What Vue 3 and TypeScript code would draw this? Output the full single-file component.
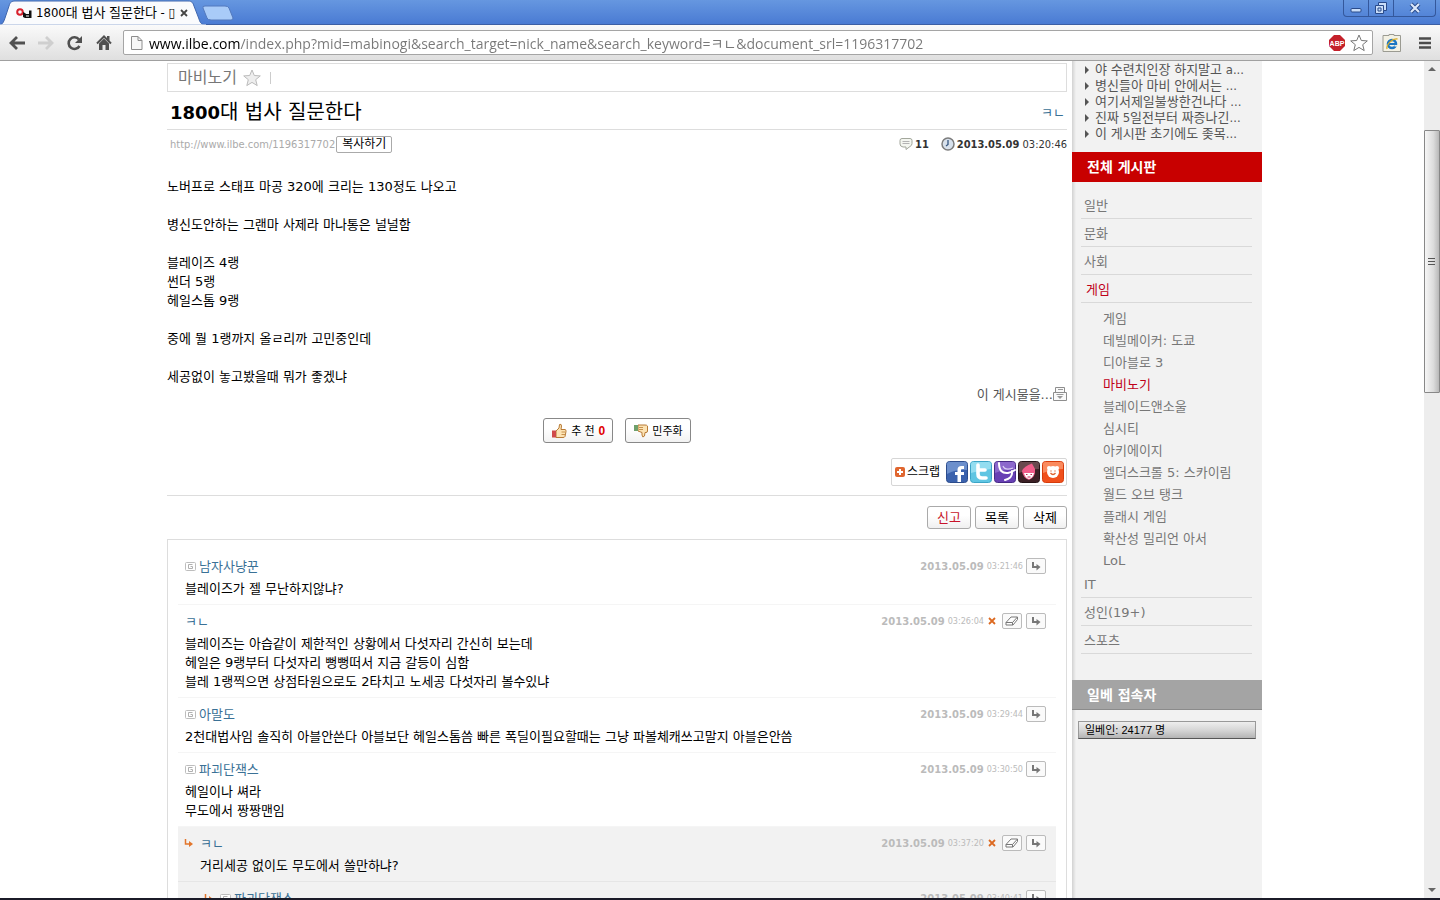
<script setup lang="ts">
import { ref } from 'vue'

interface Comment {
  author: string
  badge: boolean
  time: string
  lines: string[]
  own: boolean
  depth: number
}

const address = ref('www.ilbe.com/index.php?mid=mabinogi&search_target=nick_name&search_keyword=ㅋㄴ&document_srl=1196317702')

const paragraphs: string[][] = [
  ['노버프로 스태프 마공 320에 크리는 130정도 나오고'],
  ['병신도안하는 그랜마 사제라 마나통은 널널함'],
  ['블레이즈 4랭', '썬더 5랭', '헤일스톰 9랭'],
  ['중에 뭘 1랭까지 올ㄹ리까 고민중인데'],
  ['세공없이 놓고봤을때 뭐가 좋겠냐'],
]

const comments: Comment[] = [
  { author: '남자사냥꾼', badge: true, time: '03:21:46', lines: ['블레이즈가 젤 무난하지않냐?'], own: false, depth: 0 },
  {
    author: 'ㅋㄴ', badge: false, time: '03:26:04', own: true, depth: 0,
    lines: [
      '블레이즈는 아습같이 제한적인 상황에서 다섯자리 간신히 보는데',
      '헤일은 9랭부터 다섯자리 뻥뻥떠서 지금 갈등이 심함',
      '블레 1랭찍으면 상점타원으로도 2타치고 노세공 다섯자리 볼수있냐',
    ],
  },
  {
    author: '아말도', badge: true, time: '03:29:44', own: false, depth: 0,
    lines: ['2천대법사임 솔직히 아블안쓴다 아블보단 헤일스톰씀 빠른 폭딜이필요할때는 그냥 파볼체캐쓰고말지 아블은안씀'],
  },
  { author: '파괴단잭스', badge: true, time: '03:30:50', lines: ['헤일이나 쎠라', '무도에서 짱짱맨임'], own: false, depth: 0 },
  { author: 'ㅋㄴ', badge: false, time: '03:37:20', lines: ['거리세공 없이도 무도에서 쓸만하냐?'], own: true, depth: 1 },
  { author: '파괴단잭스', badge: true, time: '03:40:41', lines: [], own: false, depth: 2 },
]

const recent: string[] = [
  '야 수련치인장 하지말고 a...',
  '병신들아 마비 안에서는 ...',
  '여기서제일불쌍한건나다 ...',
  '진짜 5일전부터 짜증나긴...',
  '이 게시판 초기에도 좆목...',
]

const boards: { name: string; children?: string[] }[] = [
  { name: '일반' },
  { name: '문화' },
  { name: '사회' },
  {
    name: '게임',
    children: ['게임', '데빌메이커: 도쿄', '디아블로 3', '마비노기', '블레이드앤소울', '심시티', '아키에이지', '엘더스크롤 5: 스카이림', '월드 오브 탱크', '플래시 게임', '확산성 밀리언 아서', 'LoL'],
  },
  { name: 'IT' },
  { name: '성인(19+)' },
  { name: '스포츠' },
]
</script>

<template>
  <div class="window">
    <header class="titlebar">
      <div class="tab">
        <svg class="tab-shape" width="208" height="25" viewBox="0 0 208 25" aria-hidden="true">
          <path d="M0 25C3 24 4 21 5 18L9 6C10 2 12 1 15 1H188C192 1 193 3 194 6L199 19C200 23 202 25 206 25Z" fill="#fafbfd" stroke="#3f66ae" />
          <path d="M0 24.5H206V25H0Z" fill="#fafbfd" />
        </svg>
        <svg class="favicon" width="16" height="16" viewBox="0 0 16 16" aria-hidden="true">
          <circle cx="4" cy="7" r="2.800" fill="none" stroke="#d8202c" stroke-width="2" />
          <path d="M7 7l2 1 1 1h3V5.500h2.500V13H9l-2-1z" fill="#111" />
          <path d="M10 11h3" stroke="#fff" />
        </svg>
        <span class="tab-title">1800대 법사 질문한다 - ▯</span>
        <button class="tab-close" aria-label="탭 닫기">
          <svg width="8" height="8" viewBox="0 0 8 8"><path d="M1 1l6 6M7 1L1 7" stroke="#444" stroke-width="1.8" /></svg>
        </button>
      </div>
      <button class="new-tab" aria-label="새 탭">
        <svg width="32" height="16" viewBox="0 0 32 16"><path d="M1 3Q0 1 3 1H23Q26 1 27 3L31 13Q31 15 29 15H9Q6 15 5 13Z" fill="#a9cbf8" stroke="#5379bd" /></svg>
      </button>
      <div class="window-buttons">
        <button aria-label="최소화">
          <svg width="14" height="14" viewBox="0 0 14 14"><rect x="2" y="7.500" width="10" height="3.500" rx="1" fill="#c9ddf8" stroke="#294a8a" /></svg>
        </button>
        <button aria-label="이전 크기로">
          <svg width="14" height="14" viewBox="0 0 14 14"><path d="M4.500 1.500h8v8h-3v3h-8v-8h3z" fill="#c9ddf8" stroke="#294a8a" /><path d="M4.500 4.500h5v5M4 7h3v3H4z" fill="none" stroke="#294a8a" /></svg>
        </button>
        <button class="wide" aria-label="닫기">
          <svg width="14" height="14" viewBox="0 0 14 14"><path d="M3 3l8 8M11 3l-8 8" stroke="#294a8a" stroke-width="4" /><path d="M3 3l8 8M11 3l-8 8" stroke="#dbe8fb" stroke-width="2.200" /></svg>
        </button>
      </div>
    </header>

    <nav class="toolbar">
      <button class="nav" aria-label="뒤로">
        <svg width="18" height="16" viewBox="0 0 18 16"><path d="M17 8H4M9 2L3 8l6 6" fill="none" stroke="#505050" stroke-width="2.800" /></svg>
      </button>
      <button class="nav" aria-label="앞으로">
        <svg width="18" height="16" viewBox="0 0 18 16"><path d="M1 8h13M9 2l6 6-6 6" fill="none" stroke="#cfcfcf" stroke-width="2.800" /></svg>
      </button>
      <button class="nav" aria-label="새로고침">
        <svg width="18" height="16" viewBox="0 0 18 16"><path d="M13.500 11A5.800 5.800 0 1 1 13 4.500" fill="none" stroke="#505050" stroke-width="2.600" /><path d="M16 1v7H9z" fill="#505050" /></svg>
      </button>
      <button class="nav" aria-label="홈">
        <svg width="18" height="16" viewBox="0 0 18 16"><path d="M2 8.500L9 1.500l7 7" fill="none" stroke="#505050" stroke-width="2" /><path d="M12 1h2.500v5L12 4zM4 8.500l5-5 5 5V15h-3.500v-5h-3v5H4z" fill="#505050" /></svg>
      </button>
      <div class="omnibox">
        <svg width="14" height="16" viewBox="0 0 14 16" aria-hidden="true"><path d="M1.500 1.500h6.500l4 4v9H1.500z" fill="#f7f7f7" stroke="#8d8d8d" /><path d="M8 1.500v4h4" fill="none" stroke="#8d8d8d" /></svg>
        <input v-model="address" class="address" type="text" aria-label="주소" />
        <svg width="16" height="16" viewBox="0 0 16 16" role="img" aria-label="ABP">
          <path d="M5 0h6l5 5v6l-5 5H5l-5-5V5z" fill="#c4202a" />
          <text x="8" y="10.500" text-anchor="middle" class="abp">ABP</text>
        </svg>
        <button class="star" aria-label="북마크">
          <svg width="18" height="18" viewBox="0 0 18 18"><path d="M9 1l2.300 5.500 6 .4-4.600 3.800 1.500 5.900L9 13.400l-5.200 3.200 1.500-5.900L.7 6.900l6-.4z" fill="#fff" stroke="#777" stroke-linejoin="round" /></svg>
        </button>
      </div>
      <button class="ie" aria-label="IE 탭">
        <svg width="20" height="20" viewBox="0 0 20 20">
          <path d="M1 2.500h6V1.500h5v1h6.500v16H1z" fill="#f3f1e4" stroke="#9b9b92" />
          <circle cx="10" cy="11" r="4" fill="none" stroke="#1b76c4" stroke-width="2.600" />
          <path d="M7 11h7" stroke="#1b76c4" stroke-width="2" /><path d="M12.500 12.800h3" stroke="#f3f1e4" stroke-width="1.500" />
          <path d="M5 16C4 12 10 5 15.500 6" fill="none" stroke="#d8ad2c" stroke-width="1.300" />
        </svg>
      </button>
      <button class="menu" aria-label="메뉴">
        <svg width="14" height="14" viewBox="0 0 14 14"><path d="M1 2.500h12M1 7h12M1 11.500h12" stroke="#4c4c4c" stroke-width="2.600" /></svg>
      </button>
    </nav>

    <div class="viewport">
      <div class="canvas">
        <div class="container">
          <main class="main">
            <div class="board-bar">
              <a href="#" class="board-name">마비노기</a>
              <svg width="18" height="18" viewBox="0 0 18 18" aria-hidden="true"><path d="M9 1l2.300 5.500 6 .4-4.600 3.800 1.500 5.900L9 13.400l-5.200 3.200 1.500-5.900L.7 6.900l6-.4z" fill="#eee" stroke="#bbb" /></svg>
              <span class="divider"></span>
            </div>
            <div class="title-row">
              <h1><b>1800</b>대 법사 질문한다</h1>
              <a href="#" class="author">ㅋㄴ</a>
            </div>
            <div class="meta">
              <a href="#" class="permalink">http://www.ilbe.com/1196317702</a>
              <button class="copy">복사하기</button>
              <span class="meta-right">
                <svg width="14" height="14" viewBox="0 0 14 14" aria-hidden="true"><path d="M3 1.500h8q2 0 2 2v3q0 2-2 3L7 12.500V10H4Q1 9.500 1 7V3.500q0-2 2-2z" fill="#f4f6f0" stroke="#a3a79c" /><path d="M3.500 4.500h7M3.500 6.500h7" stroke="#b4b4b4" /></svg>
                <b class="count">11</b>
                <svg width="14" height="14" viewBox="0 0 14 14" aria-hidden="true"><circle cx="7" cy="7" r="6" fill="#d8e1ec" stroke="#7c7c7c" stroke-width="1.500" /><path d="M7 3v4.500L5 9" fill="none" stroke="#34557f" stroke-width="1.300" /></svg>
                <b class="date">2013.05.09</b>&nbsp;<span>03:20:46</span>
              </span>
            </div>

            <article class="article">
              <p v-for="(p, i) in paragraphs" :key="i">
                <template v-for="(line, j) in p" :key="j">{{ line }}<br v-if="j < p.length - 1" /></template>
              </p>
            </article>

            <a href="#" class="doc-menu">이 게시물을...
              <svg width="14" height="14" viewBox="0 0 14 14" aria-hidden="true"><path d="M2.500 5V.500h9V5M.500 5.500h13v8H.500z" fill="#fafafa" stroke="#8e8e8e" /><path d="M5 2.500h5M3.500 7.500h7" stroke="#999" /><path d="M4 9h6l-3 3z" fill="#999" /></svg>
            </a>

            <div class="votes">
              <button class="up">
                <svg width="16" height="16" viewBox="0 0 16 16" aria-hidden="true"><path d="M5 8l3-3 .5-3.500q2-1 2 1.500L10 6.500h4q1.500.5 1 2l-1 5q-.5 1-2 1H5z" fill="#fce3b4" stroke="#b87a35" /><path d="M10.500 9h4M10.500 11.500h3.500" stroke="#c8924d" /><path d="M1 7.500h4v7H1z" fill="#d04a4a" /></svg>
                추 천 <b>0</b>
              </button>
              <button>
                <svg width="16" height="16" viewBox="0 0 16 16" aria-hidden="true"><path d="M5 2h7q2 0 2.500 1v5q0 1.500-1.500 1.500h-1l-.5 3.500q-2 2.500-2.500-1V9.500L5 8z" fill="#fce3b4" stroke="#b87a35" /><path d="M6 4.500h4M6 6.500h4" stroke="#c8924d" /><path d="M1 2h4v6H1z" fill="#6fa06b" /></svg>
                민주화
              </button>
            </div>

            <div class="scrap-row">
              <div class="scrap">
                <svg width="10" height="10" viewBox="0 0 10 10" aria-hidden="true"><rect width="10" height="10" rx="2" fill="#e0662f" /><path d="M5 2v6M2 5h6" stroke="#fff" stroke-width="2" /></svg>
                <span>스크랩</span>
                <a href="#" aria-label="Facebook"><svg width="22" height="22" viewBox="0 0 22 22"><rect x=".5" y=".5" width="21" height="21" rx="3" fill="#3b62ad" stroke="#2c4c8c" /><path d="M1 3q0-2 2-2h16q2 0 2 2v6Q11 8 1 13z" fill="#6c8fcc" /><path d="M18 5h-2.500Q11.500 5 11.500 9v2H9v3h2.500v7H15v-7h3v-3h-3V9q0-1 1-1h2z" fill="#fff" /></svg></a>
                <a href="#" aria-label="Twitter"><svg width="22" height="22" viewBox="0 0 22 22"><rect x=".5" y=".5" width="21" height="21" rx="3" fill="#5fc5e2" stroke="#3ba4c6" /><path d="M1 3q0-2 2-2h16q2 0 2 2v5Q11 9 1 12z" fill="#93ddf0" /><path d="M8 4v9q0 4 4 4h4M8 9h7" fill="none" stroke="#fff" stroke-width="3.600" stroke-linecap="round" /></svg></a>
                <a href="#" aria-label="me2day"><svg width="22" height="22" viewBox="0 0 22 22"><rect x=".5" y=".5" width="21" height="21" rx="3" fill="#6840b4" stroke="#472a86" /><path d="M1 3q0-2 2-2h16q2 0 2 2v5Q11 8 1 12z" fill="#8c68cc" /><path d="M5 2q0 11 9 10 4-1 7-3M18 10q1 7-7 9" fill="none" stroke="#fff" stroke-width="2" stroke-linecap="round" /><path d="M9 5q2 5 10 2" fill="none" stroke="#d9cdf2" stroke-width="1.300" /></svg></a>
                <a href="#" aria-label="요즘"><svg width="22" height="22" viewBox="0 0 22 22"><rect x=".5" y=".5" width="21" height="21" rx="3" fill="#3b2025" stroke="#241216" /><path d="M1 3q0-2 2-2h16q2 0 2 2v5Q11 8 1 12z" fill="#69494e" /><path d="M4 10Q6 5 14 2.500L17 8q1 8-6 11-6-2-7-9z" fill="#f05d8a" /><path d="M6 12h10q-1 5-5 6-4-1-5-6z" fill="#fff" /><path d="M8 13.500h1.500M12.500 13.500H14M9.500 16h3" fill="none" stroke="#c22753" /></svg></a>
                <a href="#" aria-label="C로그"><svg width="22" height="22" viewBox="0 0 22 22"><rect x=".5" y=".5" width="21" height="21" rx="3" fill="#f0501c" stroke="#d63c0c" /><path d="M1 3q0-2 2-2h16q2 0 2 2v5Q11 8 1 12z" fill="#fa8a5e" /><circle cx="11" cy="11" r="6" fill="#fff" /><circle cx="7" cy="7" r="2" fill="#fff" /><circle cx="15" cy="7" r="2" fill="#fff" /><path d="M9 9.500v1M13 9.500v1M8.500 12q2.500 3 5 0" fill="none" stroke="#e0602b" stroke-width="1.300" /></svg></a>
              </div>
            </div>

            <div class="actions">
              <button class="report">신고</button>
              <button>목록</button>
              <button>삭제</button>
            </div>

            <section class="comments">
              <div v-for="(c, i) in comments" :key="i" class="comment" :class="['depth-' + c.depth, { reply: c.depth > 0 }]">
                <div class="comment-head">
                  <svg v-if="c.depth > 0" class="reply-mark" width="9" height="9" viewBox="0 0 9 9" aria-hidden="true"><path d="M1.500 0v5H6" fill="none" stroke="#e2762c" stroke-width="1.500" /><path d="M5 2l4 3-4 3z" fill="#e2762c" /></svg>
                  <svg v-if="c.badge" class="badge" width="11" height="9" viewBox="0 0 11 9" aria-hidden="true"><rect x=".5" y=".5" width="10" height="8" rx="1" fill="#fff" stroke="#bdbdbd" /><path d="M7.500 2.500h-4v4h4v-2H5.500" fill="none" stroke="#b0b0b0" /></svg>
                  <a href="#" class="comment-author">{{ c.author }}</a>
                  <span class="comment-tools">
                    <b>2013.05.09</b>
                    <span class="comment-time">{{ c.time }}</span>
                    <button v-if="c.own" class="remove" aria-label="댓글 삭제"><svg width="8" height="8" viewBox="0 0 8 8"><path d="M1 1l6 6M7 1L1 7" stroke="#dc6a22" stroke-width="1.800" /></svg></button>
                    <button v-if="c.own" class="tool" aria-label="수정"><svg width="14" height="10" viewBox="0 0 14 10"><path d="M1 6.500L6 1h6.500v2.500L8 9H1zM1 6.500h6.500L12.500 1M7.500 6.500V9" fill="#fff" stroke="#777" stroke-linejoin="round" /></svg></button>
                    <button class="tool" aria-label="답글"><svg width="10" height="9" viewBox="0 0 10 9"><path d="M2 0v5h5" fill="none" stroke="#777" stroke-width="2" /><path d="M5.500 2l4 3-4 3.500z" fill="#777" /></svg></button>
                  </span>
                </div>
                <p><template v-for="(line, j) in c.lines" :key="j">{{ line }}<br v-if="j < c.lines.length - 1" /></template></p>
              </div>
            </section>
          </main>

          <aside class="sidebar">
            <ul class="recent">
              <li v-for="item in recent" :key="item"><a href="#">{{ item }}</a></li>
            </ul>
            <h2>전체 게시판</h2>
            <ul class="boards">
              <li v-for="b in boards" :key="b.name">
                <a href="#" class="board" :class="{ current: b.children }">{{ b.name }}</a>
                <ul v-if="b.children" class="sub">
                  <li v-for="s in b.children" :key="s"><a href="#" :class="{ current: s === '마비노기' }">{{ s }}</a></li>
                </ul>
              </li>
            </ul>
            <h2 class="grey">일베 접속자</h2>
            <div class="online">일베인: 24177 명</div>
          </aside>
        </div>
      </div>

      <div class="scrollbar" aria-hidden="true">
        <svg width="16" height="16" viewBox="0 0 16 16"><path d="M4 10l4-4 4 4z" fill="#666" /></svg>
        <div class="before"></div>
        <div class="thumb"><svg width="8" height="8" viewBox="0 0 8 8"><path d="M0 .5h7M0 3.500h7M0 6.500h7" stroke="#555" /></svg></div>
        <div class="after"></div>
        <svg width="16" height="16" viewBox="0 0 16 16"><path d="M4 6l4 4 4-4z" fill="#666" /></svg>
      </div>
    </div>
    <div class="taskbar-edge"></div>
  </div>
</template>

<style>
body {
  margin: 0;
  background: #fff;
}
</style>

<style scoped>
* {
  box-sizing: border-box;
}

.window {
  display: flex;
  flex-direction: column;
  height: 100vh;
  overflow: hidden;
  color: #000;
  font: 13px/19px "DejaVu Sans", "Noto Sans CJK KR", sans-serif;
}

button {
  margin: 0;
  padding: 0;
  border: 0;
  background: none;
  color: inherit;
  font: inherit;
}

a {
  color: inherit;
  text-decoration: none;
}

svg {
  display: block;
  flex: none;
}

ul,
p,
h1,
h2 {
  margin: 0;
  padding: 0;
  list-style: none;
}

/* Browser frame */
.titlebar {
  display: flex;
  flex: none;
  height: 25px;
  background: linear-gradient(#6697e0, #4a7bd3);
  border-bottom: 1px solid #3c5fa4;
}

.tab {
  position: relative;
  display: flex;
  align-items: center;
  width: 202px;
  height: 25px;
  padding-left: 16px;
}

.tab-shape {
  position: absolute;
  inset: 0 auto auto 0;
}

.favicon,
.tab-title,
.tab-close {
  position: relative;
}

.tab-title {
  margin-left: 4px;
  font: 13px/16px "DejaVu Sans Condensed", "Noto Sans CJK KR", sans-serif;
  white-space: nowrap;
}

.tab-close {
  margin-left: 5px;
}

.new-tab {
  align-self: flex-start;
  margin-top: 5px;
}

.window-buttons {
  display: flex;
  height: 17px;
  margin: 0 4px 0 auto;
  border: 1px solid #34589c;
  border-top: 0;
  border-radius: 0 0 4px 4px;
}

.window-buttons button {
  display: grid;
  place-items: center;
  width: 25px;
  border-right: 1px solid #34589c;
}

.window-buttons .wide {
  width: 41px;
  border-right: 0;
}

.toolbar {
  display: flex;
  flex: none;
  align-items: center;
  height: 36px;
  padding: 0 8px;
  background: linear-gradient(#fafafa, #dfdfdf);
  border-bottom: 1px solid #a0a0a0;
}

.nav {
  width: 29px;
}

.omnibox {
  display: flex;
  flex: 1;
  align-items: center;
  height: 25px;
  margin-right: 9px;
  padding: 0 4px 0 6px;
  background: #fff;
  border: 1px solid #a5a5a5;
  border-radius: 2px;
}

.nav + .omnibox {
  margin-left: -1px;
}

.address {
  flex: 1;
  min-width: 0;
  height: 23px;
  margin-left: 5px;
  padding: 1px 0 0;
  border: 0;
  background: linear-gradient(90deg, #000 91px, #777 91px);
  background-clip: text;
  -webkit-text-fill-color: transparent;
  font: 14px/22px "Open Sans", "Noto Sans CJK KR", sans-serif;
}

.abp {
  fill: #fff;
  font: bold 7px "Liberation Sans", sans-serif;
}

.star {
  margin-left: 5px;
}

.menu {
  margin-left: 16px;
}

/* Page */
.viewport {
  display: flex;
  flex: 1;
  min-height: 0;
}

.canvas {
  flex: 1;
  overflow: hidden;
}

.container {
  display: grid;
  grid-template-columns: minmax(0, 1fr) 190px;
  gap: 5px;
  max-width: 1100px;
  min-height: 100%;
  margin: 0 auto;
  padding-left: 5px;
}

.main {
  padding-top: 2px;
}

.board-bar {
  display: flex;
  align-items: center;
  height: 29px;
  padding-left: 10px;
  border: 1px solid #ddd;
}

.board-name {
  margin-right: 6px;
  color: #777;
  font-size: 16px;
}

.divider {
  height: 12px;
  margin-left: 9px;
  border-left: 1px solid #ccc;
}

.title-row {
  display: flex;
  align-items: center;
  justify-content: space-between;
  height: 38px;
  padding: 4px 2px 0 3px;
  border-bottom: 1px solid #ddd;
}

h1 {
  font-size: 20px;
  font-weight: 400;
  line-height: 24px;
}

h1 b {
  font-size: 18px;
}

.author,
.comment-author {
  color: #3a7196;
}

.meta {
  display: flex;
  align-items: center;
  height: 28px;
  padding-left: 3px;
  font-family: "DejaVu Sans Condensed", "Noto Sans CJK KR", sans-serif;
  font-size: 11px;
}

.permalink {
  color: #aaa;
}

.copy {
  height: 17px;
  margin-left: 1px;
  padding: 0 5px;
  border: 1px solid #aaa;
  border-radius: 2px;
  font-size: 12px;
  line-height: 15px;
}

.meta-right {
  display: flex;
  align-items: center;
  margin-left: auto;
  color: #333;
}

.count {
  margin: 0 12px 0 2px;
}

.date {
  margin-left: 2px;
}

.article {
  display: grid;
  gap: 19px;
  margin-top: 19px;
}

.doc-menu {
  display: flex;
  align-items: center;
  justify-content: flex-end;
  height: 16px;
  color: #555;
}

.votes {
  display: flex;
  justify-content: center;
  gap: 12px;
  margin-top: 16px;
}

.votes button {
  display: flex;
  align-items: center;
  gap: 3px;
  height: 25px;
  padding: 0 7px;
  background: linear-gradient(#fff 40%, #f2f2f2);
  border: 1px solid #888;
  border-radius: 3px;
  font: 11px/16px "Liberation Sans", "Noto Sans CJK KR", sans-serif;
}

.votes .up {
  gap: 4px;
}

.votes b {
  color: #e00000;
  font-size: 12px;
}

.scrap-row {
  display: flex;
  justify-content: flex-end;
  margin-top: 15px;
  padding-bottom: 9px;
  border-bottom: 1px solid #ddd;
}

.scrap {
  display: flex;
  align-items: center;
  gap: 2px;
  height: 28px;
  padding: 0 2px 0 3px;
  border: 1px solid #d6d6d6;
  border-radius: 2px;
  font-size: 12px;
}

.scrap span {
  margin-right: 4px;
}

.actions {
  display: flex;
  justify-content: flex-end;
  gap: 4px;
  margin: 10px 0;
}

.actions button {
  width: 44px;
  height: 23px;
  background: linear-gradient(#fff 40%, #f0f0f0);
  border: 1px solid #aaa;
  border-radius: 3px;
}

.actions .report {
  color: #c8142a;
}

.comments {
  padding: 10px;
  border: 1px solid #ddd;
}

.comment {
  padding: 7px 10px 6px 7px;
  border-bottom: 1px solid #f5f5f5;
}

.reply {
  background: #f2f2f2;
  border-bottom-color: #e6e6e6;
}

.depth-1 {
  padding-left: 22px;
}

.depth-2 {
  padding-left: 42px;
}

.comment-head {
  display: flex;
  align-items: center;
  height: 18px;
  margin-bottom: 4px;
}

.reply-mark {
  margin: 0 7px 0 -16px;
}

.badge {
  margin-right: 3px;
}

.comment-tools {
  display: flex;
  align-items: center;
  margin-left: auto;
  color: #bbb;
  font-size: 10px;
}

.comment-time {
  margin: 0 3px;
  font-family: "DejaVu Sans Condensed", sans-serif;
  font-size: 9px;
}

.remove {
  margin: 0 3px 0 1px;
}

.tool {
  display: grid;
  place-items: center;
  width: 20px;
  height: 16px;
  background: #fafafa;
  border: 1px solid #bbb;
  border-radius: 2px;
}

.tool + .tool {
  margin-left: 4px;
}

.remove + .tool {
  margin-left: 3px;
}

/* Sidebar */
.sidebar {
  padding-top: 1px;
  background: linear-gradient(90deg, #d2d2d2, #f2f2f2 4px);
}

.recent {
  height: 90px;
  padding-left: 13px;
  color: #555;
  font-family: "DejaVu Sans Condensed", "Noto Sans CJK KR", sans-serif;
  line-height: 16px;
}

.recent li {
  display: flex;
  align-items: center;
  white-space: nowrap;
}

.recent li::before {
  margin-right: 6px;
  border: 4px solid transparent;
  border-right: 0;
  border-left-color: #555;
  content: "";
}

h2 {
  height: 30px;
  padding-left: 15px;
  background: #c80000;
  color: #fff;
  font-size: 14px;
  line-height: 30px;
}

.grey {
  background: #a4a4a4;
  border-bottom: 1px solid #8b8b8b;
}

.boards {
  padding: 9px 10px 26px 9px;
  color: #777;
}

.board {
  display: block;
  height: 28px;
  padding-left: 3px;
  border-bottom: 1px solid #d9d9d9;
  line-height: 30px;
}

.current {
  color: #c00018;
}

.board.current {
  padding-left: 5px;
}

.sub {
  height: 267px;
  padding: 5px 0 0 22px;
  line-height: 22px;
  white-space: nowrap;
}

.online {
  margin: 11px 6px;
  padding-left: 6px;
  background: linear-gradient(#eee, #d6d6d6 50%, #b4b4b4);
  border: 1px solid #999;
  border-bottom-color: #555;
  font: 11px/16px "Liberation Sans", "Noto Sans CJK KR", sans-serif;
}

/* Scroll bar */
.scrollbar {
  display: flex;
  flex-direction: column;
  width: 16px;
  background: #ededed;
}

.before {
  flex: 53;
}

.after {
  flex: 489;
}

.thumb {
  display: grid;
  flex: 261;
  place-items: center;
  background: linear-gradient(90deg, #f6f6f6, #dcdcdc 60%, #b8b8b8);
  border: 1px solid #888;
  border-radius: 1px;
}

.taskbar-edge {
  flex: none;
  height: 2px;
  background: #1b1b28;
}
</style>
